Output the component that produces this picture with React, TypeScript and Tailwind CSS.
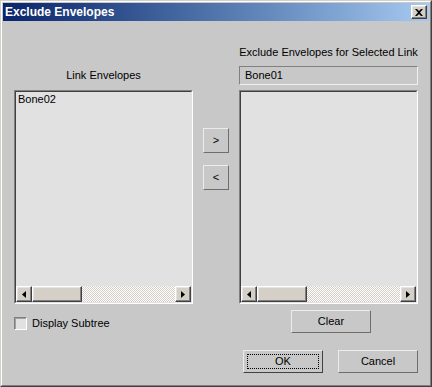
import React from 'react';

const font = { fontFamily: '"Liberation Sans", Arial, sans-serif' };

// classic raised 3d edge
const raised =
  'border border-t-[#ffffff] border-l-[#ffffff] border-b-[#404040] border-r-[#404040] shadow-[inset_-1px_-1px_#808080,inset_1px_1px_#e4e4e4]';

const ScrollArrow = ({ dir }: { dir: 'left' | 'right' }) => (
  <div className={`w-[16px] h-[16px] bg-[#d4d0c8] flex items-center justify-center ${raised}`}>
    <svg width="4" height="7" viewBox="0 0 4 7">
      {dir === 'left' ? <path d="M4 0 L0 3.5 L4 7 Z" fill="#000" /> : <path d="M0 0 L4 3.5 L0 7 Z" fill="#000" />}
    </svg>
  </div>
);

// sunken list with a horizontal scrollbar at the bottom
const ListBox = ({ items }: { items: string[] }) => (
  <div className="w-[179px] h-[214px] border border-t-[#808080] border-l-[#808080] border-b-[#ffffff] border-r-[#ffffff] bg-[#e1e1e1]">
    <div className="w-full h-full border border-t-[#404040] border-l-[#404040] border-b-[#e1e1e1] border-r-[#e1e1e1] flex flex-col">
      <div className="flex-1 pl-[2px] pt-[1px] text-[11px] leading-[13px] text-black">
        {items.map((it) => (
          <div key={it}>{it}</div>
        ))}
      </div>
      <div className="h-[16px] flex">
        <ScrollArrow dir="left" />
        <div className={`w-[50px] h-[16px] bg-[#d4d0c8] ${raised}`} />
        <div className="flex-1 h-[16px] bg-[repeating-conic-gradient(#ffffff_0_25%,#d4d0c8_0_50%)] bg-[length:2px_2px]" />
        <ScrollArrow dir="right" />
      </div>
    </div>
  </div>
);

const Btn = ({ label, className = '' }: { label: string; className?: string }) => (
  <div
    className={`h-[23px] flex items-center justify-center text-[11px] text-black bg-[#c8c8c8] border border-t-[#ececec] border-l-[#ececec] border-b-[#6e6e6e] border-r-[#6e6e6e] ${className}`}
  >
    {label}
  </div>
);

export default function App() {
  return (
    <div style={font} className="w-[432px] h-[387px] border border-t-[#d4d0c8] border-l-[#d4d0c8] border-b-[#404040] border-r-[#404040] select-none">
      <div className="w-full h-full border border-t-[#ffffff] border-l-[#ffffff] border-b-[#808080] border-r-[#808080] bg-[#c8c8c8] p-[1px] flex flex-col">
        {/* title bar */}
        <div className="h-[18px] flex items-center pl-[2px] pr-[2px] bg-gradient-to-r from-[#0a246a] to-[#a6caf0]">
          <span className="flex-1 text-white font-bold text-[12px] leading-[14px]">Exclude Envelopes</span>
          <div className={`w-[16px] h-[14px] bg-[#d4d0c8] flex items-center justify-center ${raised}`}>
            <svg width="8" height="7" viewBox="0 0 8 7">
              <path d="M0 0 L2 0 L4 2 L6 0 L8 0 L5 3.5 L8 7 L6 7 L4 5 L2 7 L0 7 L3 3.5 Z" fill="#000" />
            </svg>
          </div>
        </div>

        {/* body */}
        <div className="flex-1 flex pl-[11px] text-[11px] leading-[13px] text-black">
          <div className="w-[179px] flex flex-col pt-[48px]">
            <div className="h-[13px] text-center">Link Envelopes</div>
            <div className="mt-[8px]">
              <ListBox items={['Bone02']} />
            </div>
            <div className="mt-[13px] flex items-center">
              <div className="w-[13px] h-[13px] border border-t-[#808080] border-l-[#808080] border-b-[#ffffff] border-r-[#ffffff] bg-[#e1e1e1] shadow-[inset_1px_1px_#a0a0a0]" />
              <span className="ml-[5px]">Display Subtree</span>
            </div>
          </div>

          <div className="ml-[10px] w-[26px] flex flex-col pt-[107px]">
            <Btn label=">" className="w-[26px] h-[25px]" />
            <Btn label="<" className="w-[26px] h-[25px] mt-[12px]" />
          </div>

          <div className="ml-[10px] w-[179px] flex flex-col pt-[25px]">
            <div className="h-[13px] text-center">Exclude Envelopes for Selected Link</div>
            <div className="mt-[7px] h-[19px] border border-t-[#808080] border-l-[#808080] border-b-[#f0f0f0] border-r-[#f0f0f0] flex items-center pl-[5px]">
              Bone01
            </div>
            <div className="mt-[5px]">
              <ListBox items={[]} />
            </div>
            <Btn label="Clear" className="w-[80px] mt-[6px] ml-[52px]" />
            <div className="flex mt-[17px] ml-[4px]">
              <div className="w-[80px] h-[23px] border border-t-[#ececec] border-l-[#ececec] border-b-[#404040] border-r-[#404040] p-[3px]">
                <div className="w-full h-full border border-dotted border-black flex items-center justify-center">OK</div>
              </div>
              <Btn label="Cancel" className="w-[80px] ml-[15px]" />
            </div>
          </div>
        </div>
      </div>
    </div>
  );
}
